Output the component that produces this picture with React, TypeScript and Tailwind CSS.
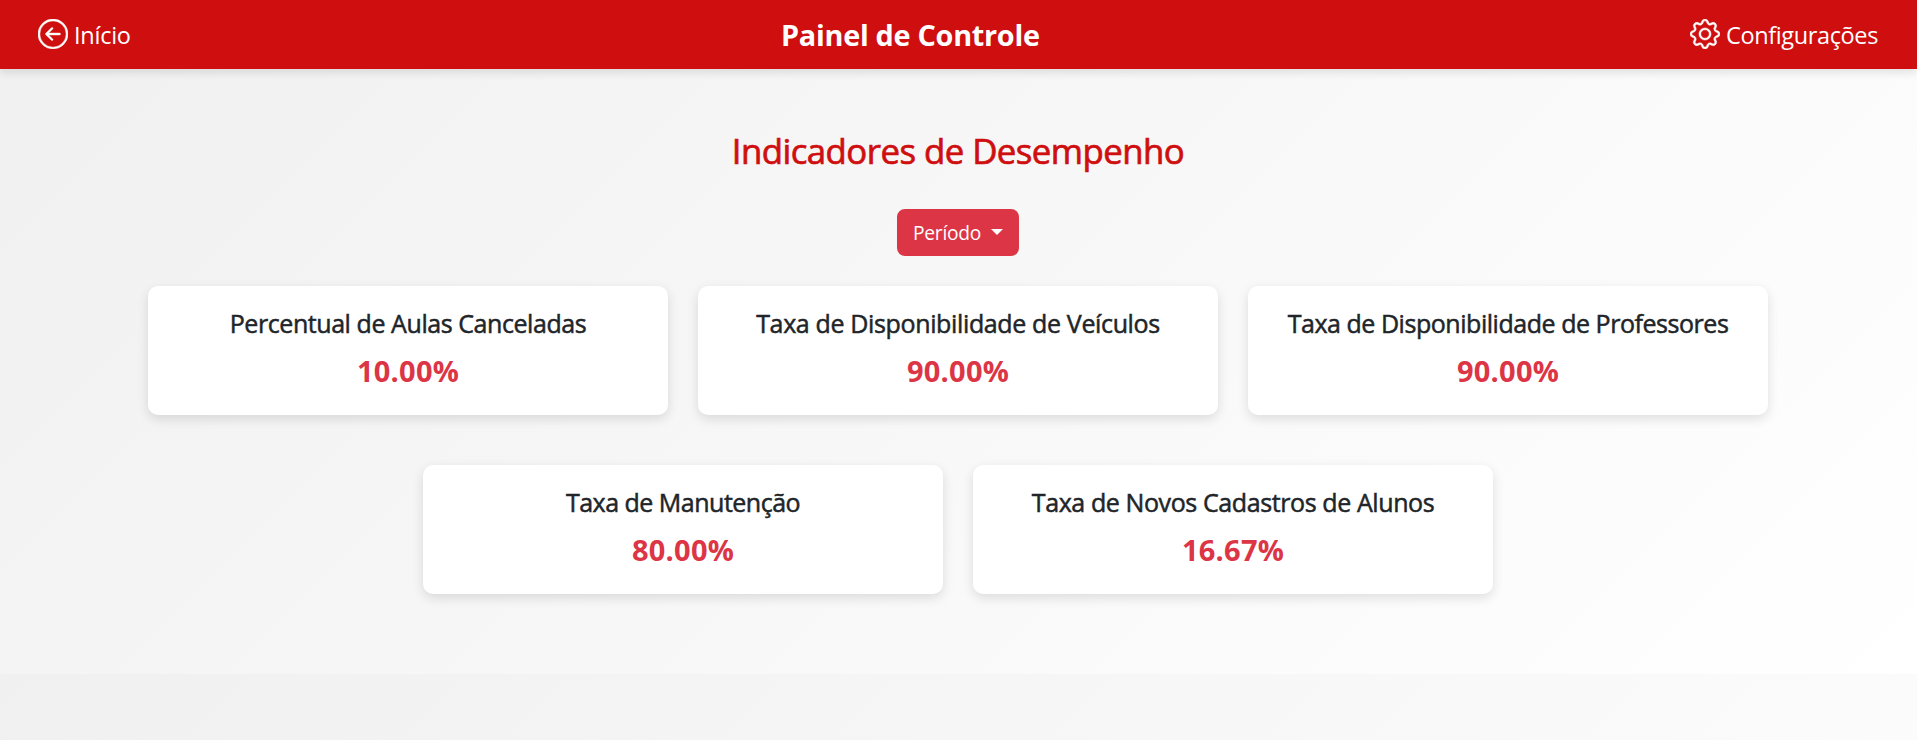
import { BsArrowLeftCircle, BsGear } from "react-icons/bs";

type Indicator = { label: string; value: string; tracking: string };

const firstRow: Indicator[] = [
  { label: "Percentual de Aulas Canceladas", value: "10.00%", tracking: "tracking-[-0.43px]" },
  { label: "Taxa de Disponibilidade de Veículos", value: "90.00%", tracking: "tracking-[-0.36px]" },
  { label: "Taxa de Disponibilidade de Professores", value: "90.00%", tracking: "tracking-[-0.46px]" },
];

const secondRow: Indicator[] = [
  { label: "Taxa de Manutenção", value: "80.00%", tracking: "tracking-[-0.5px]" },
  { label: "Taxa de Novos Cadastros de Alunos", value: "16.67%", tracking: "tracking-[-0.4px]" },
];

function Card({ label, value, tracking }: Indicator) {
  return (
    <article className="h-[129px] w-[520px] rounded-[10px] bg-white pt-[22px] text-center shadow-[0_4px_12px_rgba(0,0,0,0.12)]">
      <h3 className={`text-[25px] leading-[31px] text-[#212529] [-webkit-text-stroke:0.5px_#212529] ${tracking}`}>{label}</h3>
      <p className="mt-[10px] text-[29px] leading-[43px] font-bold tracking-[0.25px] text-[#dc3545]">{value}</p>
    </article>
  );
}

export default function App() {
  return (
    <div className="h-[740px] bg-[linear-gradient(135deg,#f0f0f0,#ffffff)] bg-[length:100%_674px] bg-repeat-y font-['Open_Sans','Noto_Sans',sans-serif]">
      <header className="flex h-[69px] items-center justify-between bg-[#cf0f0f] pr-[39px] pl-[38px] text-white shadow-[0_4px_8px_rgba(0,0,0,0.1)]">
        <a href="#" className="flex items-center gap-1.5 text-[23.5px] leading-9 tracking-[-0.25px]">
          <BsArrowLeftCircle className="mb-px size-[30px] [stroke-width:0.25]" />
          <span>Início</span>
        </a>
        <h1 className="text-[28.8px] leading-[43px] font-bold tracking-[-0.27px]">Painel de Controle</h1>
        <a href="#" className="flex items-center gap-1.5 text-[23.5px] leading-9 tracking-[-0.37px]">
          <BsGear className="mb-px size-[30px] [stroke-width:0.25]" />
          <span>Configurações</span>
        </a>
      </header>

      <main className="flex flex-col items-center pt-[61px] pr-px">
        <h2 className="text-[34.8px] leading-[42px] tracking-[-0.55px] text-[#cf0f0f] [-webkit-text-stroke:0.7px_#cf0f0f]">
          Indicadores de Desempenho
        </h2>
        <button className="mt-[37px] flex h-[47px] w-[122px] items-center rounded-lg bg-[#dc3545] pb-px pl-4 text-[19.2px] leading-[29px] tracking-[-0.25px] text-white">
          Período
          <span className="mb-px ml-[10px] border-x-[6px] border-t-[6px] border-x-transparent border-t-white" />
        </button>
        <section className="mt-[30px] flex gap-[30px]">
          {firstRow.map((item) => (
            <Card key={item.label} {...item} />
          ))}
        </section>
        <section className="mt-[50px] flex gap-[30px]">
          {secondRow.map((item) => (
            <Card key={item.label} {...item} />
          ))}
        </section>
      </main>
    </div>
  );
}
